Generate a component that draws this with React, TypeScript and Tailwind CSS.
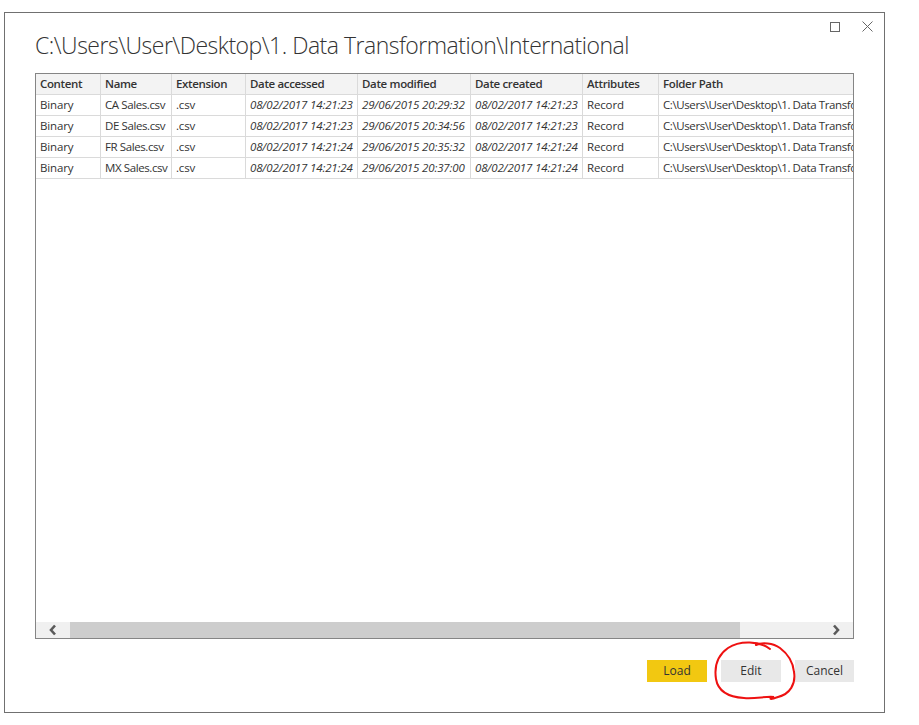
import React from "react";

const cols = [65, 71, 74, 112, 113, 112, 76];
const headers = ["Content", "Name", "Extension", "Date accessed", "Date modified", "Date created", "Attributes", "Folder Path"];
const rows = [
  ["Binary", "CA Sales.csv", ".csv", "08/02/2017 14:21:23", "29/06/2015 20:29:32", "08/02/2017 14:21:23", "Record", "C:\\Users\\User\\Desktop\\1. Data Transformation\\International\\"],
  ["Binary", "DE Sales.csv", ".csv", "08/02/2017 14:21:23", "29/06/2015 20:34:56", "08/02/2017 14:21:23", "Record", "C:\\Users\\User\\Desktop\\1. Data Transformation\\International\\"],
  ["Binary", "FR Sales.csv", ".csv", "08/02/2017 14:21:24", "29/06/2015 20:35:32", "08/02/2017 14:21:24", "Record", "C:\\Users\\User\\Desktop\\1. Data Transformation\\International\\"],
  ["Binary", "MX Sales.csv", ".csv", "08/02/2017 14:21:24", "29/06/2015 20:37:00", "08/02/2017 14:21:24", "Record", "C:\\Users\\User\\Desktop\\1. Data Transformation\\International\\"],
];
const italicCols = [3, 4, 5];

function Cell({ i, children, bold, italic }: { i: number; children: React.ReactNode; bold?: boolean; italic?: boolean }) {
  const w = i < cols.length ? cols[i] : undefined;
  const track = bold
    ? "font-semibold tracking-[-0.35px] "
    : i === 1 || i === 7
    ? "tracking-[-0.4px] "
    : "tracking-[-0.15px] ";
  return (
    <div
      className={
        "h-full flex items-center pl-[4px] whitespace-nowrap overflow-hidden shrink-0 " +
        (i < cols.length ? "border-r border-[#dadada] " : "flex-1 ") +
        track +
        (italic ? "italic " : "")
      }
      style={w ? { width: w } : undefined}
    >
      {children}
    </div>
  );
}

export default function App() {
  return (
    <div className="w-[919px] h-[725px] bg-white relative" style={{ fontFamily: '"Segoe UI", "Open Sans", "Noto Sans", sans-serif' }}>
      <div className="absolute left-[4px] top-[12px] w-[881px] h-[701px] border border-[#707070] flex flex-col">
        {/* window controls */}
        <div className="flex justify-end items-center h-[11px] mt-[8px] pr-[11px] gap-[22px]">
          <div className="w-[10px] h-[10px] border border-[#666]" />
          <svg width="11" height="11" viewBox="0 0 11 11">
            <path d="M0.5 0.5 L10.5 10.5 M10.5 0.5 L0.5 10.5" stroke="#666" strokeWidth="1" />
          </svg>
        </div>
        <div className="px-[30px]">
          <div className="h-[26px] text-[23px] font-light text-[#333] leading-[26px] whitespace-nowrap tracking-[-0.5px]">
            C:\Users\User\Desktop\1. Data Transformation\International
          </div>
        </div>
        <div className="px-[30px] mt-[15px]">
          <div className="h-[566px] border border-[#858585] flex flex-col text-[11.5px] text-[#333]">
            <div className="h-[21px] flex bg-[#f3f3f3] border-b border-[#dadada]">
              {headers.map((h, i) => (
                <Cell key={i} i={i} bold>
                  {h}
                </Cell>
              ))}
            </div>
            {rows.map((r, ri) => (
              <div key={ri} className="h-[21px] flex border-b border-[#dadada]">
                {r.map((c, i) => (
                  <Cell key={i} i={i} italic={italicCols.includes(i)}>
                    {c}
                  </Cell>
                ))}
              </div>
            ))}
            <div className="flex-1" />
            <div className="h-[16px] flex bg-[#f0f0f0]">
              <div className="w-[34px] flex items-center justify-center">
                <svg width="10" height="12" viewBox="0 0 10 12">
                  <path d="M7 1.5 L3 6 L7 10.5" stroke="#5a5a5a" strokeWidth="2.6" fill="none" />
                </svg>
              </div>
              <div className="w-[670px] bg-[#cdcdcd]" />
              <div className="flex-1" />
              <div className="w-[34px] flex items-center justify-center">
                <svg width="10" height="12" viewBox="0 0 10 12">
                  <path d="M3 1.5 L7 6 L3 10.5" stroke="#5a5a5a" strokeWidth="2.6" fill="none" />
                </svg>
              </div>
            </div>
          </div>
        </div>
        <div className="flex justify-end px-[30px] mt-[21px] gap-[14px] text-[12px] text-[#333]">
          <div className="w-[60px] h-[22px] bg-[#f2c811] flex items-center justify-center">Load</div>
          <div className="w-[60px] h-[22px] bg-[#e8e8e8] flex items-center justify-center">Edit</div>
          <div className="w-[59px] h-[22px] bg-[#e8e8e8] flex items-center justify-center">Cancel</div>
        </div>
      </div>
      <svg className="absolute left-[710px] top-[636px] pointer-events-none" width="92" height="70" viewBox="0 0 92 70">
        <path
          d="M60 13 C50 5 30 4 18 12 C8 19 4 30 6 43 C8 55 18 61 34 62 C46 63 56 60 64 61 C58 63 60 64 68 61 C80 58 86 48 84 36 C83 25 78 18 70 12 C63 7 52 6 46 9"
          stroke="#ee1111"
          strokeWidth="2"
          fill="none"
          strokeLinecap="round"
        />
      </svg>
    </div>
  );
}
